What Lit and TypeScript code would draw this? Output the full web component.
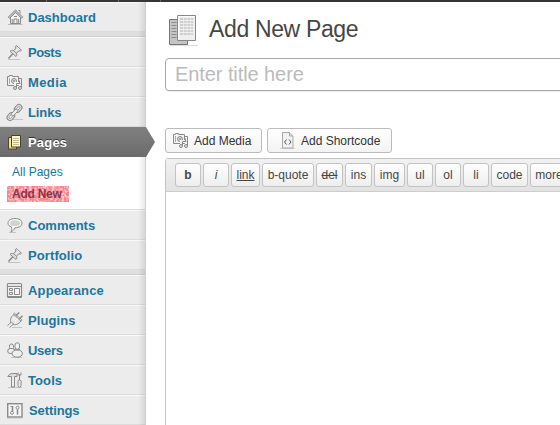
import { LitElement, html, css, svg } from "lit";
import { customElement, property } from "lit/decorators.js";

const icons: Record<string, unknown> = {
  home: svg`<path d="M3.500 8v6.500h10V8l-5-4.500z" fill="#f2f2f2"/><path d="M1.500 9 8.500 2.200l7 6.800" stroke-width="2.400"/><path d="M1.500 9 8.500 2.200l7 6.800" stroke="#f4f4f4" stroke-width=".8"/><path d="M11.500 1.500h1.500v3M7 14.500v-4.500h3v4.500M5.300 10v4M11.700 10v4M7 7.500h3"/><path d="M1 15.500h14.500" stroke="#bbb"/>`,
  pin: svg`<path d="M1 15.500h12" stroke="#c4c4c4"/><path d="m1.500 14.500 4.500-5" stroke-width="1.500"/><path d="m9.200 1.500 5.300 4.700-1.300 1-1.200-.5-2.500 2.500c.6 1.200.4 2.200-.5 3.300L3 7.300c1-1 2.200-1.200 3.500-.7L9 4.200 8.300 2.700z" fill="#dedede"/><path d="m7.500 8 3-3M10.500 3.500l2 1.800" stroke="#fff"/><path d="m6.500 6.600 3 2.600"/>`,
  media: svg`<path d="M.5 2.500h2v-1h3v1h6v9H.5z" fill="#f3f3f3"/><path d="M2.500 4v6" stroke="#aaa"/><circle cx="7" cy="7" r="2.500" fill="#ddd"/><circle cx="7" cy="7" r=".6"/><path d="M8.500 13.500v-4h5" stroke="#f3f3f3" stroke-width="3"/><path d="M9.500 13.500v-4h4M11.500 4.500h3v9M12.500 6.500v3"/><circle cx="8" cy="14" r="1.500" fill="#ddd"/><circle cx="13" cy="14" r="1.500" fill="#ddd"/>`,
  link: svg`<path d="M5 15.500h11" stroke="#c4c4c4"/><g transform="rotate(-48 7.500 8.500)"><rect x="-2.200" y="5.500" width="8.500" height="6" rx="3" fill="#e0e0e0"/><rect x="8.700" y="5.500" width="8.500" height="6" rx="3" fill="#e0e0e0"/><rect x="-.2" y="7.500" width="4.500" height="2" rx="1" fill="#fff" stroke-width=".8"/><rect x="10.700" y="7.500" width="4.500" height="2" rx="1" fill="#fff" stroke-width=".8"/><rect x="3.500" y="7" width="8" height="3" rx="1.500" fill="#eee" stroke-width=".9"/></g>`,
  pages: svg`<path d="M1.500 3.500h8v11.500h-8z" fill="#eed873" stroke="#4d4828"/><path d="M3 5.500v8" stroke="#fff5b5"/><path d="M4.500 1.500h9v11.500h-9z" fill="#fbf6d0" stroke="#47432b"/><path d="M6 4.500h6M6 6.500h6M6 8.500h6M6 10.500h6" stroke="#c5bd8b"/>`,
  comment: svg`<path d="M2 15.500h7" stroke="#c4c4c4"/><path d="M8 1.500c4.300 0 7 1.800 7 4.700 0 2.500-2.500 4.500-7 4.500-.7 1.800-1.800 3.300-4 4.100.8-1.600.8-3 .5-4.800C2.300 9.300 1 7.900 1 6.200c0-2.900 2.700-4.700 7-4.700z" fill="#f7f7f7"/><ellipse cx="8" cy="6.200" rx="5" ry="2.900" fill="#d3d3d3" stroke="none"/>`,
  appearance: svg`<rect x=".5" y="1.500" width="14" height="14" rx="1" fill="#f5f5f5" stroke-width="1.200"/><path d="M1 4.500h13M1 14.500h13"/><path d="M2.500 3h10" stroke="#d4d4d4"/><path d="M2.500 6.500h3v2h-3zM2.500 10.500h3v2h-3zM7.500 6.500h5v6h-5z"/>`,
  plug: svg`<path d="M5 15.500h10" stroke="#c4c4c4"/><path d="M3.800 11C2.800 7.500 4 4.500 7 2.500l7 6.500c-2.500 3.500-6 4.500-9 3z" fill="#e9e9e9"/><path d="m6.500 2 1-.8 7.500 7-1 1z" fill="#fff"/><path d="m9 3.500 3.300-3M12.500 6.800l3-3" stroke-width="1.500"/><path d="m.5 13.500 4-3.500 2 2-4 3.500" fill="#eee"/><path d="m6 7.500 2-2M8 9l3-2.500" stroke="#fff"/>`,
  users: svg`<path d="M4 15.500h11" stroke="#c4c4c4"/><rect x="2.500" y="2" width="4" height="5.500" rx="2" fill="#eee"/><rect x=".7" y="6.500" width="7" height="5" rx="2.500" fill="#eee"/><rect x="8" y=".8" width="4.500" height="6.500" rx="2.200" fill="#f2f2f2"/><ellipse cx="10.200" cy="11.500" rx="5.200" ry="3.700" fill="#eee"/><path d="M7.500 7.200c1.500 1 4 1 5.500 0"/>`,
  tools: svg`<path d="M1 15.500h14" stroke="#c4c4c4"/><path d="M.8 4.500c1-2 2.500-3 4.500-3H10v3H7.500v10.500h-3V4.500H3z" fill="#ddd"/><path d="M6 5v9" stroke="#fff"/><path d="M12.500 8V2.500M11 .5v2.500h3V.5"/><rect x="11" y="8" width="3" height="7" rx="1.200" fill="#eee"/>`,
  settings: svg`<rect x=".7" y="1.700" width="14.300" height="13.300" fill="#f5f5f5" stroke-width="1.400"/><path d="M5.500 4v5M10.500 7.500v5" stroke-width="1.600"/><circle cx="5" cy="10.800" r="1.500"/><circle cx="10.500" cy="5.700" r="1.500"/><path d="M3.500 4.500h2" /><path d="M0 15.800h15" stroke="#aaa"/>`,
  sheet: svg`<path d="M0 16.500h15" stroke="#d2d2d2"/><path d="M2.500.5h7L13 4v12H2.500z" fill="#f2f2f2" stroke="#a8a8a8"/><path d="M9.500.5V4H13" fill="#ddd" stroke="#a8a8a8"/><path d="M6.500 7.500 4.500 10l2 2.500M9 7.500l2 2.500-2 2.500" stroke="#555"/>`,
};

@customElement("wp-icon")
class WpIcon extends LitElement {
  @property() name = "";
  static styles = css`
    :host { display: block; flex: none; width: 16px; height: 17px; }
    svg { display: block; overflow: visible; }
  `;
  render() {
    return html`<svg width="16" height="17" viewBox="0 0 16 17" fill="none" stroke="#8a8a8a">${icons[this.name]}</svg>`;
  }
}

@customElement("side-menu")
class SideMenu extends LitElement {
  static styles = css`
    :host { display: block; flex: none; position: relative; box-sizing: border-box; width: 146px; height: 423px; background: #ececec; border-right: 1px solid #cfcfcf; }
    .shade { position: absolute; top: 0; right: 0; bottom: 0; width: 7px; background: linear-gradient(90deg, transparent, rgba(0,0,0,.09)); }
    .item { box-sizing: border-box; height: 30px; display: flex; align-items: center; gap: 5px; padding: 1px 0 0 7px; border-top: 1px solid #f9f9f9; border-bottom: 1px solid #dcdcdc; font-weight: bold; font-size: 13px; line-height: 18px; color: #21759b; }
    .sep { box-sizing: border-box; height: 5px; background: #dfdfdf; border-bottom: 1px solid #cfcfcf; }
    .current { position: relative; z-index: 1; margin-right: -1px; background: linear-gradient(#808080, #6b6b6b); background-origin: border-box; border-color: transparent; color: #fff; text-shadow: 0 -1px 0 #333; }
    .current::after { content: ""; position: absolute; top: -1px; left: 100%; width: 9px; height: 30px; background: linear-gradient(#808080, #6b6b6b); clip-path: polygon(0 0, 100% 50%, 0 100%); }
    .indent { gap: 6px; }
    .sub { box-sizing: border-box; height: 53px; padding: 6px 0 0 7px; background: #fff; border-bottom: 1px solid #dcdcdc; font-size: 12px; line-height: 18px; color: #21759b; }
    .sub div { padding-left: 5px; }
    .sub .here { width: 57px; height: 16px; margin-top: 5px; line-height: 16px; font-weight: bold; letter-spacing: -.25px; color: #8f3446; position: relative; }
    .here svg { position: absolute; inset: 0; }
    .here span { position: relative; }
  `;
  item(label: string, icon: string, spacing = 0.1, extra = "") {
    return html`<div class="item ${extra}"><wp-icon name=${icon}></wp-icon><span style="letter-spacing:${spacing}px">${label}</span></div>`;
  }
  render() {
    return html`
      ${this.item("Dashboard", "home", 0)}
      <div class="sep"></div>
      ${this.item("Posts", "pin", -0.5)}
      ${this.item("Media", "media", 0.4)}
      ${this.item("Links", "link", -0.1)}
      ${this.item("Pages", "pages", 0.2, "current")}
      <div class="sub">
        <div>All Pages</div>
        <div class="here">
          <svg width="62" height="16">
            <filter id="grain" x="0" y="0" width="100%" height="100%"><feTurbulence type="fractalNoise" baseFrequency=".4" numOctaves="2" seed="4"/><feColorMatrix values="0 0 0 0 1  0 0 0 0 1  0 0 0 0 1  3 0 0 0 -1.2"/></filter>
            <rect width="62" height="16" fill="#f7838d"/>
            <rect width="62" height="16" filter="url(#grain)" opacity=".7"/>
          </svg>
          <span>Add New</span>
        </div>
      </div>
      ${this.item("Comments", "comment", 0)}
      ${this.item("Portfolio", "pin")}
      <div class="sep"></div>
      ${this.item("Appearance", "appearance", 0.15)}
      ${this.item("Plugins", "plug")}
      ${this.item("Users", "users", -0.3)}
      ${this.item("Tools", "tools")}
      ${this.item("Settings", "settings", -0.1, "indent")}
      <div class="shade"></div>
    `;
  }
}

@customElement("app-root")
class AppRoot extends LitElement {
  static styles = css`
    :host { display: block; width: 560px; height: 425px; overflow: hidden; background: #fff; font-family: "Liberation Sans", Arial, sans-serif; color: #333; }
    .top { display: flex; height: 2px; background: #373535; }
    .top i { flex: none; width: 1px; height: 2px; background: #666; margin-left: 46px; }
    .top i + i { margin-left: 71px; }
    .top i + i + i { margin-left: 41px; }
    .layout { display: flex; height: 423px; }
    .main { flex: none; width: 440px; padding-left: 19px; }
    .head { display: flex; gap: 10px; height: 56px; }
    .head svg { margin: 12px 0 0 3px; }
    h1 { margin: 12px 0 0; font-weight: normal; font-size: 23px; line-height: 30px; letter-spacing: -.35px; color: #464646; white-space: nowrap; }
    .title { box-sizing: border-box; height: 33px; padding-left: 9px; border: 1px solid #a8a8a8; border-radius: 4px; font-size: 20px; line-height: 31px; letter-spacing: -.08px; color: #bbb; box-shadow: 0 1px 1px #eee; }
    .media { display: flex; gap: 5px; margin-top: 37px; }
    .btn { box-sizing: border-box; height: 25px; display: flex; align-items: center; gap: 5px; padding-left: 7px; border: 1px solid #bbb; border-radius: 3px; background: linear-gradient(#fff, #f3f3f3); font-size: 12px; color: #333; white-space: nowrap; }
    .add { width: 97px; }
    .short { width: 125px; padding-left: 12px; }
    .editor { box-sizing: border-box; height: 300px; margin-top: 5px; border: 1px solid #c4c4c4; border-radius: 3px 0 0; }
    .bar { box-sizing: border-box; height: 33px; display: flex; gap: 2px; padding: 4px 0 0 9px; background: linear-gradient(#f1f1f1, #e2e2e2); border-bottom: 1px solid #ccc; }
    .key { flex: none; box-sizing: border-box; height: 24px; border: 1px solid #c3c3c3; border-radius: 3px; background: linear-gradient(#fff, #eee); font-size: 12px; line-height: 22px; text-align: center; color: #464646; white-space: nowrap; }
    .b { font-weight: bold; }
    .i { font-style: italic; }
    .link { text-decoration: underline; }
    .del { text-decoration: line-through; }
  `;
  keys: [string, number][] = [["b", 26], ["i", 26], ["link", 29], ["b-quote", 52], ["del", 27], ["ins", 27], ["img", 31], ["ul", 26], ["ol", 26], ["li", 26], ["code", 37], ["more", 38]];
  render() {
    return html`
      <div class="top"><i></i><i></i><i></i></div>
      <div class="layout">
        <side-menu></side-menu>
        <div class="main">
          <div class="head">
            <svg width="31" height="34" viewBox="0 0 31 34" fill="none">
              <path d="M2 31.500h28" stroke="#ddd" />
              <path d="M1.500 5.500h18v25h-18z" fill="#c4c4c4" stroke="#777" />
              <path d="M3.500 8.500h5M3.500 11.500h5M3.500 14.500h5M3.500 17.500h5M3.500 20.500h5M3.500 23.500h5" stroke="#8c8c8c" />
              <path d="M9.500 1.500h18v25h-18z" fill="#efefef" stroke="#888" />
              <path d="M10.500 25.500v-23h16" stroke="#fff" />
              <path d="M12 5h13M12 8h13M12 11h13M12 14h13M12 17h13M12 20h13" stroke="#b0b0b0" stroke-dasharray="3 .7" />
            </svg>
            <h1>Add New Page</h1>
          </div>
          <div class="title">Enter title here</div>
          <div class="media">
            <div class="btn add"><wp-icon name="media"></wp-icon>Add Media</div>
            <div class="btn short"><wp-icon name="sheet"></wp-icon>Add Shortcode</div>
          </div>
          <div class="editor">
            <div class="bar">${this.keys.map(([k, w]) => html`<div class="key ${k}" style="width:${w}px">${k}</div>`)}</div>
          </div>
        </div>
      </div>
    `;
  }
}
